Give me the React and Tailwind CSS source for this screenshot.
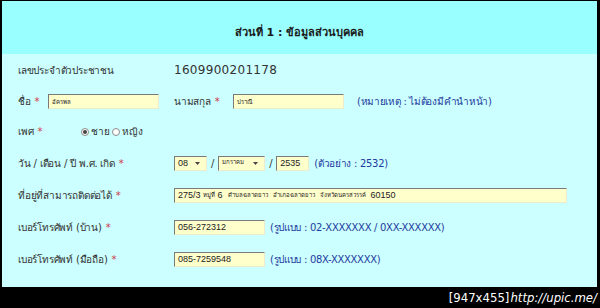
const LABEL = 'text-[10px] tracking-[-0.2px] text-[#333333] whitespace-nowrap';
const NOTE = 'text-[10px] tracking-[-0.3px] text-[#1f3aa0] whitespace-nowrap';
const INPUT = 'h-[15px] shrink-0 bg-[#ffffcc] border border-[#ececcc] border-t-[#7a7a7a] border-l-[#7a7a7a] px-[3px] text-[9px] text-[#222] leading-[13px] whitespace-nowrap overflow-hidden';
const MONO = { fontFamily: '"Liberation Sans", Arial, sans-serif' };

function Star() {
  return <span className="text-[#d0344a] ml-[4px]">*</span>;
}

function Tiny({ children }) {
  return <span className="text-[6px] align-middle">{children}</span>;
}

function Row({ h, label, req, children }) {
  return (
    <div className="flex items-center pl-[16px]" style={{ height: h }}>
      <div className={`w-[156px] shrink-0 ${LABEL}`}>
        {label}
        {req && <Star />}
      </div>
      <div className="flex items-center">{children}</div>
    </div>
  );
}

function Select({ w, children }) {
  return (
    <div className={`${INPUT} flex items-center justify-between pr-[6px]`} style={{ width: w }}>
      <span style={MONO}>{children}</span>
      <svg width="5" height="3" viewBox="0 0 5 3">
        <path d="M0 0h5L2.5 3z" fill="#444" />
      </svg>
    </div>
  );
}

function Radio({ checked, label }) {
  return (
    <label className="flex items-center gap-[2px] mr-[3px]">
      <span className="w-[8px] h-[8px] rounded-full border border-[#8a8a8a] bg-white flex items-center justify-center">
        {checked && <span className="w-[4px] h-[4px] rounded-full bg-[#444]" />}
      </span>
      <span className={LABEL}>{label}</span>
    </label>
  );
}

function Slash() {
  return <span className={`${LABEL} mx-[4px]`}>/</span>;
}

export default function App() {
  return (
    <div className="w-[600px] h-[308px] bg-black flex flex-col" style={{ fontFamily: 'Tahoma, "DejaVu Sans", "Noto Sans", sans-serif' }}>
      <div className="mt-[1px] ml-[2px] w-[595px] h-[286px] bg-[#ccffff] flex flex-col">
        <div className="h-[53px] bg-[#99ffff] flex items-end justify-center pb-[13px]">
          <h1 className="text-[11px] font-bold text-[#1a1a1a]">ส่วนที่ 1 : ข้อมูลส่วนบุคคล</h1>
        </div>

        <Row h={32} label="เลขประจำตัวประชาชน">
          <span className="text-[12px] tracking-[0.3px] text-[#333]">1609900201178</span>
        </Row>

        <div className="h-[30px] flex items-center pl-[16px]">
          <span className={`${LABEL} w-[30px]`}>ชื่อ<Star /></span>
          <div className={`${INPUT} w-[111px]`}><Tiny>อัครพล</Tiny></div>
          <span className={`${LABEL} ml-[15px] w-[59px]`}>นามสกุล<Star /></span>
          <div className={`${INPUT} w-[111px]`}><Tiny>ปราณี</Tiny></div>
          <span className={`${NOTE} ml-[13px]`}>(หมายเหตุ : ไม่ต้องมีคำนำหน้า)</span>
        </div>

        <div className="h-[31px] flex items-center pl-[16px]">
          <span className={`${LABEL} w-[63px]`}>เพศ<Star /></span>
          <Radio checked label="ชาย" />
          <Radio label="หญิง" />
        </div>

        <Row h={32} label="วัน / เดือน / ปี พ.ศ. เกิด" req>
          <Select w={33}>08</Select>
          <Slash />
          <Select w={47}><Tiny>มกราคม</Tiny></Select>
          <Slash />
          <div className={`${INPUT} w-[33px]`} style={MONO}>2535</div>
          <span className={`${NOTE} ml-[5px]`}>(ตัวอย่าง : 2532)</span>
        </Row>

        <Row h={32} label="ที่อยู่ที่สามารถติดต่อได้" req>
          <div className={`${INPUT} w-[393px]`} style={MONO}>
            275/3 <Tiny>หมู่ที่</Tiny> 6 &nbsp;<Tiny>ตำบลฉลาดยาว</Tiny> &nbsp;<Tiny>อำเภอฉลาดยาว</Tiny> &nbsp;<Tiny>จังหวัดนครสวรรค์</Tiny> &nbsp;60150
          </div>
        </Row>

        <Row h={32} label="เบอร์โทรศัพท์ (บ้าน)" req>
          <div className={`${INPUT} w-[91px]`} style={MONO}>056-272312</div>
          <span className={`${NOTE} ml-[5px]`}>(รูปแบบ : 02-XXXXXXX / 0XX-XXXXXX)</span>
        </Row>

        <Row h={32} label="เบอร์โทรศัพท์ (มือถือ)" req>
          <div className={`${INPUT} w-[91px]`} style={MONO}>085-7259548</div>
          <span className={`${NOTE} ml-[5px]`}>(รูปแบบ : 08X-XXXXXXX)</span>
        </Row>
      </div>

      <div className="flex-1 flex items-center justify-end pr-[3px] text-white text-[13px] leading-none">
        <span style={{ fontFamily: '"DejaVu Sans Condensed", "DejaVu Sans", sans-serif' }}>[947x455]</span>
        <span className="italic ml-[1px]" style={{ fontFamily: '"DejaVu Sans Condensed", "DejaVu Sans", sans-serif' }}>http://upic.me/</span>
      </div>
    </div>
  );
}
